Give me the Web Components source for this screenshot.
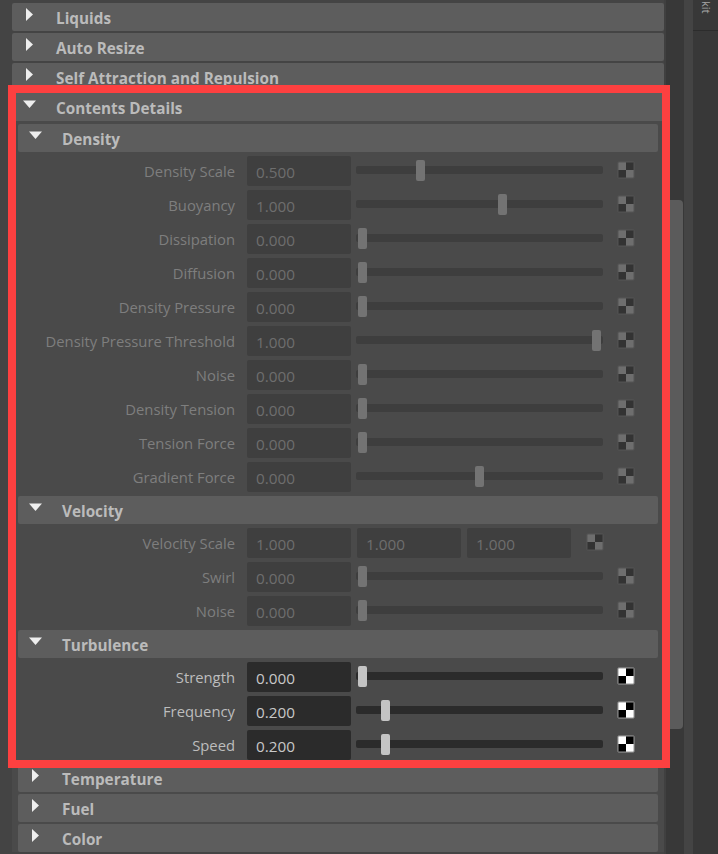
<!DOCTYPE html>
<html>
<head>
<meta charset="utf-8">
<style>
  html, body { margin: 0; height: 100%; background: #444; overflow: hidden; }
  body { font-family: "Open Sans", "Liberation Sans", sans-serif; }
</style>
</head>
<body>
<template id="row-tpl">
  <style>
    :host { display: grid; grid-template-columns: 231px 104px 1fr 18px; height: 30px; align-items: center; padding: 0 29px 0 4px; margin-bottom: 4px; color: var(--label); font-size: 14.8px; }
    :host(:last-child) { margin-bottom: 0; }
    :host([vector]) { grid-template-columns: 231px 104px 235px 18px; }
    .label { text-align: right; padding-right: 12px; white-space: nowrap; }
    .field { height: 30px; line-height: 33px; background: var(--field); color: var(--value); border-radius: 2px; padding-left: 9px; box-sizing: border-box; font-size: 15.3px; }
    .slider { position: relative; height: 8px; margin: 0 14px 2px 5px; background: var(--track); border-radius: 2px; }
    .thumb { position: absolute; top: -6px; width: 9px; height: 21px; background: var(--thumb); border-radius: 2px; }
    .triple { display: grid; grid-template-columns: 104px 104px; gap: 6px; margin-left: 6px; }
    svg { display: block; margin-bottom: 2px; }
  </style>
  <div class="label"></div>
  <div class="field"></div>
  <div class="ctl"></div>
  <svg width="18" height="18" viewBox="0 0 18 18">
    <rect x=".5" y=".5" width="17" height="17" rx="2" fill="var(--chk-bg)" stroke="var(--chk-bd)"/>
    <rect x="1.5" y="1.5" width="7.5" height="7.5" fill="var(--chk-a)"/>
    <rect x="9" y="1.5" width="7.5" height="7.5" fill="var(--chk-b)"/>
    <rect x="1.5" y="9" width="7.5" height="7.5" fill="var(--chk-b)"/>
    <rect x="9" y="9" width="7.5" height="7.5" fill="var(--chk-a)"/>
  </svg>
</template>

<template id="section-tpl">
  <style>
    :host { display: block; }
    .bar { display: flex; height: 28px; background: #5d5d5d; border-radius: 2px; color: #bbb; font-weight: 700; font-size: 15.3px; line-height: 31px; margin-bottom: 2px; }
    .tri { width: 44px; flex: none; position: relative; }
    .tri svg { position: absolute; left: 13px; top: 3px; }
    :host([open]) .tri svg { left: 10px; }
    .name { white-space: nowrap; }
    .body { display: none; }
    :host([open]) .body { display: block; }
    :host([open]) .bar { margin-bottom: 0; }
  </style>
  <div class="bar"><div class="tri"></div><div class="name"></div></div>
  <div class="body"><slot></slot></div>
</template>

<template id="scroll-tpl">
  <style>
    :host { display: block; width: 18px; height: 100%; background: #383838; flex: none; padding-left: 4px; box-sizing: border-box; }
    .thumb { margin-top: 200px; height: 529px; width: 13px; background: #5b5b5b; border-radius: 0 4px 4px 0; }
  </style>
  <div class="thumb"></div>
</template>

<template id="side-tpl">
  <style>
    :host { display: block; flex: none; width: 25px; height: 100%; background: #383838; color: #a5a5a5; font-size: 11px; line-height: 15px; }
    .tab { height: 31px; border-bottom: 1px solid #2c2c2c; box-sizing: border-box; padding: 1px 0 0 6px; }
    .tab span { display: block; writing-mode: vertical-rl; }
  </style>
  <div class="tab"><span><slot></slot></span></div>
</template>

<template id="frame-tpl">
  <style>
    :host { position: absolute; left: 8px; top: 85px; width: 662px; height: 683px; box-sizing: border-box; border: 8px solid #fd4040; pointer-events: none; }
  </style>
</template>

<template id="panel-tpl">
  <style>
    :host { display: flex; position: relative; height: 854px; overflow: hidden; background: #444; }
    .main { width: 652px; margin-left: 12px; padding-top: 3px; flex: none; box-sizing: border-box; }
    .gap { width: 2px; flex: none; background: #404040; }
    .rail { width: 9px; flex: none; }
  </style>
  <div class="main"><slot></slot></div>
  <div class="gap"></div>
  <app-scroll></app-scroll>
  <div class="rail"></div>
  <app-side>kit</app-side>
  <slot name="over"></slot>
</template>

<script>
function fromTpl(el, id) {
  const shadow = el.attachShadow({ mode: 'open' });
  shadow.appendChild(document.getElementById(id).content.cloneNode(true));
  return shadow;
}

class AppPanel extends HTMLElement {
  constructor() { super(); fromTpl(this, 'panel-tpl'); }
}

class AppScroll extends HTMLElement {
  constructor() { super(); fromTpl(this, 'scroll-tpl'); }
}

class AppSide extends HTMLElement {
  constructor() { super(); fromTpl(this, 'side-tpl'); }
}

class AppFrame extends HTMLElement {
  constructor() { super(); fromTpl(this, 'frame-tpl'); }
}

class AppSection extends HTMLElement {
  constructor() { super(); fromTpl(this, 'section-tpl'); }
  connectedCallback() {
    const s = this.shadowRoot;
    s.querySelector('.name').textContent = this.getAttribute('name');
    const open = this.hasAttribute('open');
    s.querySelector('.tri').innerHTML = open
      ? '<svg width="16" height="16" viewBox="0 0 16 16"><path d="M1 4.5h13L7.5 12z" fill="#eee"/></svg>'
      : '<svg width="16" height="16" viewBox="0 0 16 16"><path d="M1 2l7 6.5L1 15z" fill="#eee"/></svg>';
  }
}

class AppRow extends HTMLElement {
  constructor() { super(); fromTpl(this, 'row-tpl'); }
  connectedCallback() {
    const s = this.shadowRoot;
    s.querySelector('.label').textContent = this.getAttribute('label');
    s.querySelector('.field').textContent = this.getAttribute('value');
    const ctl = s.querySelector('.ctl');
    if (this.hasAttribute('vector')) {
      const v = this.getAttribute('vector').split(',');
      ctl.innerHTML = '<div class="triple">' + v.map(x => `<div class="field">${x}</div>`).join('') + '</div>';
    } else {
      const pos = this.getAttribute('pos') || 0;
      ctl.innerHTML = `<div class="slider"><div class="thumb" style="left:${pos}px"></div></div>`;
    }
  }
}

customElements.define('app-panel', AppPanel);
customElements.define('app-scroll', AppScroll);
customElements.define('app-side', AppSide);
customElements.define('app-frame', AppFrame);
customElements.define('app-section', AppSection);
customElements.define('app-row', AppRow);
</script>

<style>
  .dim { --label: #7e7e7e; --value: #6e6e6e; --field: #3f3f3f; --track: #3e3e3e; --thumb: #737373; --chk-bg: #555; --chk-bd: #505050; --chk-a: #6e6e6e; --chk-b: #333; }
  .live { --label: #bdbdbd; --value: #c8c8c8; --field: #2b2b2b; --track: #2b2b2b; --thumb: #c4c4c4; --chk-bg: #999; --chk-bd: #777; --chk-a: #fff; --chk-b: #000; }
  .inner { display: block; background: #4a4a4a; padding-top: 3px; }
  .sub { display: block; margin: 0 6px 4px; }
  .rows { display: block; padding: 4px 0 0; margin: 0 -6px; }
  .after { display: block; margin: 0 6px 2px; }
</style>

<app-panel>
  <app-section name="Liquids"></app-section>
  <app-section name="Auto Resize"></app-section>
  <app-section name="Self Attraction and Repulsion"></app-section>
  <app-section name="Contents Details" open>
    <div class="inner">
      <app-section class="sub" name="Density" open>
        <div class="rows dim">
          <app-row label="Density Scale" value="0.500" pos="60"></app-row>
          <app-row label="Buoyancy" value="1.000" pos="142"></app-row>
          <app-row label="Dissipation" value="0.000" pos="2"></app-row>
          <app-row label="Diffusion" value="0.000" pos="2"></app-row>
          <app-row label="Density Pressure" value="0.000" pos="2"></app-row>
          <app-row label="Density Pressure Threshold" value="1.000" pos="236"></app-row>
          <app-row label="Noise" value="0.000" pos="2"></app-row>
          <app-row label="Density Tension" value="0.000" pos="2"></app-row>
          <app-row label="Tension Force" value="0.000" pos="2"></app-row>
          <app-row label="Gradient Force" value="0.000" pos="119"></app-row>
        </div>
      </app-section>
      <app-section class="sub" name="Velocity" open>
        <div class="rows dim">
          <app-row label="Velocity Scale" value="1.000" vector="1.000,1.000"></app-row>
          <app-row label="Swirl" value="0.000" pos="2"></app-row>
          <app-row label="Noise" value="0.000" pos="2"></app-row>
        </div>
      </app-section>
      <app-section class="sub" name="Turbulence" open>
        <div class="rows live">
          <app-row label="Strength" value="0.000" pos="2"></app-row>
          <app-row label="Frequency" value="0.200" pos="25"></app-row>
          <app-row label="Speed" value="0.200" pos="25"></app-row>
        </div>
      </app-section>
      <app-section class="after" name="Temperature"></app-section>
      <app-section class="after" name="Fuel"></app-section>
      <app-section class="after" name="Color"></app-section>
    </div>
  </app-section>
  <app-frame slot="over"></app-frame>
</app-panel>
</body>
</html>
